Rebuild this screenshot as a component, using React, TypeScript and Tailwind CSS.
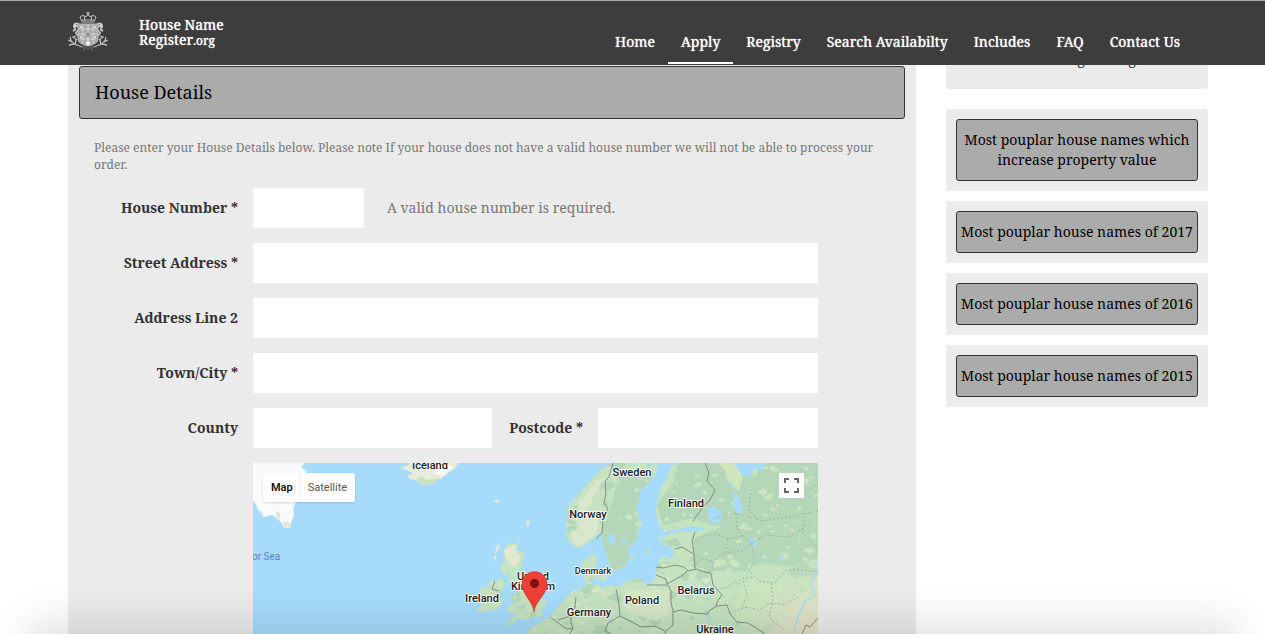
import type { ReactNode } from 'react';

const navItems = ['Home', 'Apply', 'Registry', 'Search Availabilty', 'Includes', 'FAQ', 'Contact Us'];

const popularLinks = [
  'Most pouplar house names which increase property value',
  'Most pouplar house names of 2017',
  'Most pouplar house names of 2016',
  'Most pouplar house names of 2015',
];

const continent =
  'M272 171L274 168L281 163L287 160L290 157L297 154L301 149L305 144L309 139L314 134L318 129L324 127L330 125L333 121L330 113L329 104L330 97L335 95L342 90L344 97L342 104L344 112L338 118L339 123L345 121L349 125L357 122L364 124L374 118L387 115L393 121L398 121L402 114L404 104L406 98L410 92L416 96L421 92L419 84L411 82L410 74L419 70L430 68L440 69L453 66L440 63L425 66L411 69L405 60L403 50L404 40L407 27L415 14L417 6L422 0H565V171Z';
const scandinavia =
  'M360 0L352 3L351 6L345 7L344 12L340 14L338 19L334 19L335 23L330 25L329 30L324 29L325 34L321 35L320 39L314 39L318 43L311 47L316 50L313 52L316 56L312 62L315 66L312 73L317 79L324 85L330 84L334 80L339 77L344 72L348 70L349 76L351 84L354 91L355 97L358 105L361 108L366 105L371 106L374 99L376 94L375 87L380 80L384 76L385 68L389 61L385 54L383 44L387 35L387 27L397 19L403 10L405 0Z';
const britain =
  'M255 80L260 81L266 80L263 87L272 90L270 97L267 107L272 110L275 117L279 124L281 131L284 135L293 137L292 144L287 147L291 151L286 155L280 154L272 156L264 156L260 160L252 163L256 157L264 151L255 150L254 145L261 140L257 134L264 129L265 122L260 121L255 119L257 109L252 113L247 106L252 97L250 89Z';
const ireland =
  'M237 117L243 119L249 114L252 121L248 129L250 136L248 142L242 147L233 148L227 150L223 147L229 142L225 138L228 133L227 126L235 124Z';
const greenland =
  'M0 0H52L48 4L54 9L49 12L50 19L46 21L48 27L42 33L43 39L40 45L41 52L38 60L37 65L31 64L27 58L24 56L19 52L10 54L9 49L5 47L3 41L0 38Z';
const iceland =
  'M157 0L154 3L147 4L155 8L160 10L154 13L157 16L163 17L168 20L175 22L182 18L188 16L195 10L202 6L205 0Z';

const borders = [
  'M360 0L356 14L352 18L353 30L351 40L355 46L350 57L349 70L343 76',
  'M452 0L456 10L454 18L462 27L457 37L450 44L440 58',
  'M442 69L439 78L441 90L442 104L443 106L435 108L431 104L422 102L411 105L403 104',
  'M422 86L429 84L437 89L441 91',
  'M403 112L413 116L414 121L430 112L434 108',
  'M394 122H415L418 128L418 140L420 147L420 162L413 168L412 171',
  'M443 106L452 109L458 110L460 122L469 132L464 139L463 143',
  'M420 149L428 147L440 150L454 151L457 147L464 143L474 142L477 151L484 159L495 160L505 166L512 171',
  'M323 134L322 144L318 151L318 160L320 165L317 171',
  'M363 126L366 142L367 153L355 160L352 168L358 171',
  'M297 154L305 160L314 166L320 165M305 157L318 153',
  'M242 118L239 126L246 128',
  'M367 153L379 159L388 164L402 163L412 168',
];

const regions = [
  'M462 55L477 50L489 52L500 55L510 58L535 54L565 48',
  'M440 80L452 72L463 71L475 76L490 73L500 80L512 72L536 74L550 66L558 58',
  'M459 108L461 98L472 90L475 76M472 90L488 88L500 80',
  'M498 80L502 96L496 108L506 118L522 120L532 108L540 106L565 109',
  'M498 30L496 46L505 57M483 50L484 66L490 73',
  'M460 128L474 124L485 117L499 114M477 150L492 144L506 147L517 140L532 142L545 134',
  'M518 120L520 138L516 154L525 162L535 171',
  'M551 53L550 70L560 80L565 88M490 118L494 132L488 146',
  'M540 35L552 30L565 20M440 104L448 96L461 98',
];

const labels = [
  { name: 'Iceland', x: 177, y: 6 },
  { name: 'Sweden', x: 379, y: 13 },
  { name: 'Norway', x: 335, y: 55 },
  { name: 'Finland', x: 433, y: 44 },
  { name: 'Ireland', x: 229, y: 139 },
  { name: 'Poland', x: 389, y: 141 },
  { name: 'Belarus', x: 443, y: 131 },
  { name: 'Germany', x: 336, y: 153 },
  { name: 'Ukraine', x: 462, y: 170 },
  { name: 'United', x: 280, y: 117 },
  { name: 'Kingdom', x: 280, y: 127 },
];

function makePatches(count: number, seed: number, maxSize: number) {
  let state = seed;
  const next = () => {
    state = (state * 16807) % 2147483647;
    return state / 2147483647;
  };
  return Array.from({ length: count }, () => {
    const cx = 245 + next() * 320;
    const cy = next() * 171;
    const size = 1 + next() * next() * maxSize;
    const points = Array.from({ length: 8 }, (_, i) => {
      const angle = (i / 8) * Math.PI * 2;
      const r = size * (0.4 + next() * 0.9);
      return `${(cx + Math.cos(angle) * r * 1.4).toFixed(1)},${(cy + Math.sin(angle) * r).toFixed(1)}`;
    });
    return points.join(' ');
  });
}

const forest = makePatches(200, 4177, 9);
const meadow = makePatches(150, 911, 5);
const pale = makePatches(160, 7331, 3);

function MapDrawing() {
  return (
    <svg viewBox="0 0 565 171" preserveAspectRatio="xMidYMin slice" className="block w-full" role="img" aria-label="Map of Northern Europe">
      <defs>
        <clipPath id="land">
          <path d={`${continent}${scandinavia}${britain}${ireland}`} />
        </clipPath>
        <radialGradient id="steppe" cx="565" cy="180" r="80" gradientUnits="userSpaceOnUse">
          <stop offset="0" stopColor="#ecdfc6" />
          <stop offset="0.5" stopColor="#e2e3c8" stopOpacity="0.8" />
          <stop offset="1" stopColor="#d5e4c4" stopOpacity="0" />
        </radialGradient>
      </defs>
      <rect width="565" height="171" fill="#a6dbfb" />
      <path d={greenland} fill="#f8fafc" />
      <path d="M3 41L5 47L9 49L10 53L5 48ZM23 48L27 50L27 57L23 55ZM30 58L37 60L37 64L31 63Z" fill="#dfe8d2" />
      <path d={iceland} fill="#e6ecd9" />
      <path d="M163 17L168 13L174 17L185 15L188 16L175 22Z" fill="#cbe3b9" />
      <path d="M182 4L198 2L200 5L190 13L182 11Z" fill="#f8f9f5" />
      <path d="M241 38L244 36L247 38L243 40ZM275 56L277 60L274 64L273 60ZM264 74L266 75L265 77ZM243 84L247 80L246 86L242 91ZM241 92L244 94L242 98Z" fill="#e2e8d3" />
      <path d={`${continent}${scandinavia}${britain}${ireland}`} fill="#c5e3c0" />
      <g clipPath="url(#land)">
        <path d="M425 0H565V95L540 104L510 100L492 108L460 108L443 103L440 76L465 65L440 55L410 63L404 42L420 20Z" fill="#b5d8b9" />
        <path d="M366 14L400 12L385 60L384 80L370 107L350 95L348 70L356 50Z" fill="#b5d8b9" />
        {forest.map((points, i) => <polygon key={i} points={points} fill="#b5d8b9" />)}
        {meadow.map((points, i) => <polygon key={i} points={points} fill="#cae5bf" />)}
        <g opacity="0.7">{pale.map((points, i) => <polygon key={i} points={points} fill="#e0e9d0" />)}</g>
        <path d="M340 22L348 16L346 28L338 34L340 40L333 46L344 53L346 60L344 70L335 78L324 84L319 78L318 70L326 64L321 56L326 46L324 38L331 34Z" fill="#dfe9d0" opacity="0.75" />
        <path d="M251 86L262 81L264 90L268 94L262 104L254 98Z" fill="#e2e8d3" opacity="0.9" />
        <path d="M373 126L416 128L417 149L404 158L376 150L368 140Z" fill="#dde8ca" opacity="0.65" />
        <path d="M465 0H481L490 13L486 28L474 18L472 7Z" fill="#d0e7bd" />
        <path d="M480 140L496 116L518 122L530 146L510 163L484 158Z" fill="#cae6bd" opacity="0.8" />
        <rect x="460" y="95" width="105" height="76" fill="url(#steppe)" />
      </g>
      <path d="M454 46L461 43L469 50L468 58L459 62L456 54ZM480 29L487 35L490 48L485 51L480 43ZM481 0H513L510 7L502 6L496 15L488 11ZM354 72L361 71L363 78L356 82ZM368 77L374 75L371 83ZM497 74L504 79L503 84L496 81ZM394 0L399 1L394 7ZM475 18L479 20L478 25ZM528 92L531 93L529 100Z" fill="#a6dbfb" />
      <path d="M347 104L353 107L356 113L351 118L346 115ZM343 111L348 113L344 119Z" fill="#c5e3c0" />
      <path d="M377 94L381 91L379 99ZM393 87L398 85L395 92ZM405 73L410 74L408 79Z" fill="#c5e3c0" />
      <path d="M564 105L558 120L562 132L552 138L545 154L540 171" fill="none" stroke="#a6dbfb" strokeWidth="1.3" />
      <path d="M455 153L457 159L454 166" fill="none" stroke="#a6dbfb" />
      <g fill="none" stroke="#858d88" strokeWidth="1">
        {borders.map((d) => <path key={d} d={d} />)}
        <path d="M549 171L553 162L557 164L565 155" />
      </g>
      <g fill="none" stroke="#97aa9b" strokeWidth="0.8" strokeDasharray="2 2">
        {regions.map((d) => <path key={d} d={d} />)}
      </g>
      <g
        fontFamily="Roboto, sans-serif"
        fontWeight="500"
        fontSize="11"
        fill="#222"
        stroke="#fff"
        strokeWidth="2"
        strokeOpacity="0.8"
        strokeLinejoin="round"
        textAnchor="middle"
        style={{ paintOrder: 'stroke' }}
      >
        {labels.map(({ name, x, y }) => <text key={name} x={x} y={y}>{name}</text>)}
        <text x="340" y="111" fontSize="9">Denmark</text>
      </g>
      <text x="-1" y="97" fontFamily="Roboto, sans-serif" fontSize="10" fill="#5586c8">or Sea</text>
      <path d="M281 149C280 138 269 132 269 121A12.5 12.5 0 0 1 294 121C294 132 282 138 281 149Z" fill="#ee4036" stroke="#c9382f" strokeWidth="0.6" />
      <circle cx="281.500" cy="120.500" r="4.500" fill="#7e1012" />
    </svg>
  );
}

function Crest() {
  return (
    <svg viewBox="0 0 40 40" className="size-10" role="img" aria-label="Coat of arms">
      <g fill="none" stroke="#bdbdbd" strokeWidth="1">
        <path d="M14 10L12 5L15 3L18 5L20 2L22 5L25 3L28 5L26 10ZM14 8H26M20 0V4M18 1H22M16 4L17 9M24 4L23 9" />
        <path d="M10 12H30V28Q29 32 20 34Q11 32 10 28Z" fill="#a8a8a8" />
        <path d="M20 12V33M11 22H29M15 13V31M25 13V31M11 17H29M12 27H28" stroke="#d6d6d6" />
        <path d="M11 12Q5 10 6 15Q9 17 5 19M29 12Q35 10 34 15Q31 17 35 19M10 15L7 13M30 15L33 13M10 18L8 21L10 24M30 18L32 21L30 24" strokeWidth="2" />
        <path d="M2 25Q3 31 9 33L14 35M38 25Q37 31 31 33L26 35M4 30L0 28M6 32L1 33M8 28L7 33M36 30L40 28M34 32L39 33M32 28L33 33M8 24L5 25L9 28M32 24L35 25L31 28" strokeWidth="1.300" />
        <path d="M13 36Q16 33 20 37Q24 33 27 36M17 36L15 39M23 36L25 39" stroke="#777" />
      </g>
      <path d="M18 20H22V24L20 26L18 24Z" fill="#949494" stroke="#ccc" strokeWidth="0.7" />
      <path d="M18 30L20 29L22 30L22 32L20 34L18 32Z" fill="#f2f2f2" />
      <g fill="#ededed">
        <circle cx="13" cy="15" r="1" /><circle cx="27" cy="15" r="1" />
        <circle cx="13" cy="25" r="1" /><circle cx="27" cy="25" r="1" />
        <circle cx="7" cy="14" r="1" /><circle cx="33" cy="14" r="1" />
      </g>
    </svg>
  );
}

function Row({ id, label, children }: { id: string; label: string; children?: ReactNode }) {
  return (
    <div className="flex items-center gap-[15px]">
      <label htmlFor={id} className="w-36 shrink-0 text-right font-bold text-[#333]">{label}</label>
      {children ?? <input id={id} type="text" className="h-10 min-w-0 flex-1 bg-white px-3" />}
    </div>
  );
}

export default function App() {
  return (
    <div className="relative flex h-screen flex-col overflow-hidden bg-white font-['Noto_Serif','Droid_Serif','DejaVu_Serif',serif] text-sm leading-5">
      <header className="relative z-10 flex h-[65px] shrink-0 justify-between border-t border-[#a5aaa7] bg-[#3d3d3d] pr-[72px] pl-[68px] text-white text-shadow-[0_0_1px_#fff]">
        <a href="#home" className="flex items-center gap-[31px] pb-0.5 leading-[15px]">
          <Crest />
          <span>House Name<br />Register<span className="text-xs leading-none">.org</span></span>
        </a>
        <nav className="flex items-end">
          {navItems.map((item) => (
            <a
              key={item}
              href={`#${item.toLowerCase().replace(' ', '-')}`}
              className={item === 'Apply' ? 'mb-px h-8 border-b-2 border-white px-[13px]' : 'mb-px h-8 px-[13px]'}
            >
              {item}
            </a>
          ))}
        </nav>
      </header>

      <div className="flex min-h-0 flex-1 gap-[30px] pr-[57px] pl-[68px]">
        <main className="min-w-0 flex-1 bg-[#ebebeb] px-[11px] pt-px">
          <h1 className="flex h-[53px] items-center rounded-[3px] border border-[#333] bg-[#ababab] px-[15px] pb-0.5 text-lg text-black">
            House Details
          </h1>
          <form className="flex flex-col gap-[15px] pt-5 pr-[87px] pl-[15px]">
            <p className="-mr-16 text-xs leading-[17px] text-[#777]">
              Please enter your House Details below. Please note If your house does not have a valid house number we will not be able to process your order.
            </p>
            <Row id="house-number" label="House Number *">
              <input id="house-number" type="text" className="h-10 w-[111px] bg-white px-3" />
              <span className="pl-2 text-[#777]">A valid house number is required.</span>
            </Row>
            <Row id="street" label="Street Address *" />
            <Row id="line2" label="Address Line 2" />
            <Row id="town" label="Town/City *" />
            <Row id="county" label="County">
              <input id="county" type="text" className="h-10 min-w-0 flex-1 bg-white px-3" />
              <label htmlFor="postcode" className="w-[76px] shrink-0 text-right font-bold text-[#333]">Postcode *</label>
              <input id="postcode" type="text" className="h-10 w-[220px] bg-white px-3" />
            </Row>
            <div className="relative ml-[159px]">
              <MapDrawing />
              <div className="absolute top-2.5 left-2.5 flex rounded-[2px] bg-white font-[Roboto,sans-serif] text-[11px] text-[#565656] shadow-sm">
                <button type="button" className="h-[29px] pr-[7px] pl-2 font-medium text-black">Map</button>
                <button type="button" className="h-[29px] border-l border-[#eee] pr-2 pl-[7px]">Satellite</button>
              </div>
              <button type="button" aria-label="Toggle fullscreen" className="absolute top-2.5 right-3.5 flex size-[25px] items-center justify-center bg-white">
                <svg viewBox="0 0 15 15" className="size-[15px]" fill="none" stroke="#666" strokeWidth="2">
                  <path d="M1 5V1H5M10 1H14V5M14 10V14H10M5 14H1V10" />
                </svg>
              </button>
            </div>
          </form>
        </main>

        <aside className="-mt-8 flex w-[262px] shrink-0 flex-col gap-2.5 text-center text-black">
          <section className="mb-2.5 rounded-[3px] bg-[#ebebeb] px-2.5 pt-4 pb-5 text-[#333]">House registering</section>
          {popularLinks.map((title) => (
            <section key={title} className="rounded-[3px] bg-[#ebebeb] p-2.5">
              <a href="#names" className="block rounded-[3px] border border-[#333] bg-[#ababab] py-2.5">
                {title}
              </a>
            </section>
          ))}
        </aside>
      </div>

      <div className="pointer-events-none absolute inset-x-10 -bottom-10 h-10 shadow-[0_0_40px_12px_rgba(0,0,0,0.12)]" />
      <div className="pointer-events-none absolute inset-x-10 -bottom-10 h-10" />
    </div>
  );
}
